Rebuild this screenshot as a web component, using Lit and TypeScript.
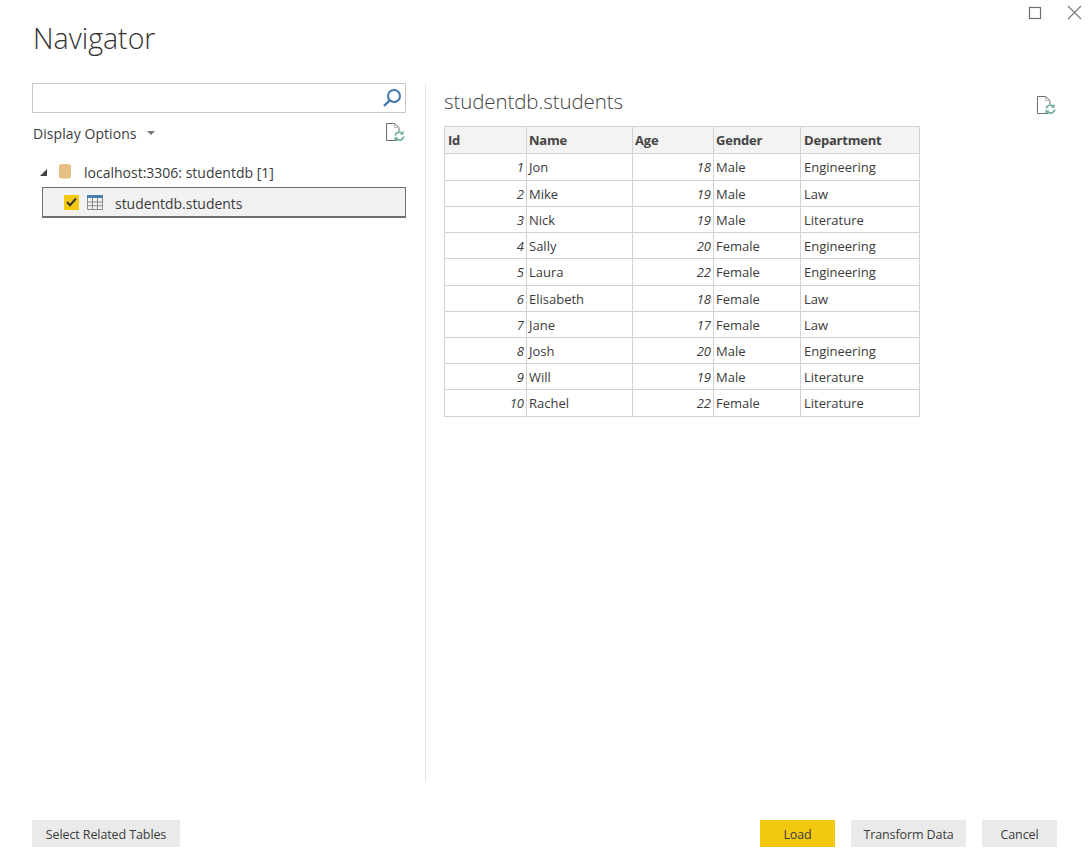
import { LitElement, html, css, svg } from "lit";
import { customElement } from "lit/decorators.js";

const rows: [number, string, number, string, string][] = [
  [1, "Jon", 18, "Male", "Engineering"],
  [2, "Mike", 19, "Male", "Law"],
  [3, "Nick", 19, "Male", "Literature"],
  [4, "Sally", 20, "Female", "Engineering"],
  [5, "Laura", 22, "Female", "Engineering"],
  [6, "Elisabeth", 18, "Female", "Law"],
  [7, "Jane", 17, "Female", "Law"],
  [8, "Josh", 20, "Male", "Engineering"],
  [9, "Will", 19, "Male", "Literature"],
  [10, "Rachel", 22, "Female", "Literature"],
];

const refreshDoc = svg`<svg class="doc" width="20" height="20" viewBox="0 0 20 20" fill="none">
  <path d="M12 18.5H1.5V1.5H9.5L14 5.5V9" stroke="#6e6e6e" stroke-width="1"/>
  <path d="M9.5 1.5V5.5H14" stroke="#b5b5b5" stroke-width="1"/>
  <path d="M10.2 13.5a4.2 4.2 0 0 1 7.2-2" stroke="#6fae9a" stroke-width="1.7"/>
  <path d="M18.8 14.5a4.2 4.2 0 0 1-7.2 2.2" stroke="#6fae9a" stroke-width="1.7"/>
  <path d="M18.6 8.8v4h-3.8z" fill="#6fae9a"/>
  <path d="M9.4 19.2v-4h3.8z" fill="#6fae9a"/>
</svg>`;

@customElement("app-root")
export class AppRoot extends LitElement {
  static styles = css`
    :host {
      display: flex;
      flex-direction: column;
      width: 1088px;
      height: 857px;
      background: #fff;
      color: #3b3b3b;
      font-family: "Open Sans", "Noto Sans", "Liberation Sans", sans-serif;
      font-size: 13.5px;
      overflow: hidden;
    }
    .controls {
      display: flex;
      justify-content: flex-end;
      align-items: center;
      gap: 25px;
      padding: 5px 6px 0 0;
      height: 15px;
    }
    .controls svg { display: block; }
    h1 {
      margin: 0;
      padding: 0 0 0 33px;
      height: 63px;
      font-weight: 300;
      font-size: 28.5px;
      line-height: 36px;
      color: #333;
      box-sizing: border-box;
    }
    .main {
      display: flex;
      height: 699px;
    }
    .left {
      width: 374px;
      margin-left: 32px;
      flex: none;
      display: flex;
      flex-direction: column;
    }
    .divider {
      width: 1px;
      background: #e6e6e6;
      margin: 0 18px 0 19px;
      flex: none;
    }
    .search {
      box-sizing: border-box;
      height: 30px;
      border: 1px solid #c8c8c8;
      display: flex;
      justify-content: flex-end;
      align-items: center;
      padding-right: 2px;
    }
    .options {
      display: flex;
      align-items: center;
      height: 40px;
      padding: 0 1px 0 1px;
      box-sizing: border-box;
      font-size: 14px;
    }
    .options .label { letter-spacing: 0.07px; }
    .caret {
      width: 0;
      height: 0;
      margin-left: 10px;
      border-left: 4px solid transparent;
      border-right: 4px solid transparent;
      border-top: 4px solid #777;
    }
    .options .doc { margin-left: auto; margin-right: 0; margin-top: -2px; }
    .node {
      display: flex;
      align-items: center;
      height: 30px;
      margin-top: 4px;
      padding: 0 0 0 8px;
      box-sizing: border-box;
      font-size: 14px;
    }
    .tri {
      width: 0;
      height: 0;
      border-left: 7px solid transparent;
      border-bottom: 7px solid #444;
      margin-right: 12px;
    }
    .node svg { margin-top: -2px; }
    .node .name { margin-left: 13px; }
    .item {
      box-sizing: border-box;
      height: 31px;
      margin-left: 10px;
      background: #f2f2f2;
      border: 1px solid #707070;
      border-width: 1px 1px 2px 1px;
      display: flex;
      align-items: center;
      padding-left: 21px;
      font-size: 14px;
      letter-spacing: -0.03px;
    }
    .check {
      width: 15px;
      height: 15px;
      background: #f2c811;
      display: flex;
      align-items: center;
      justify-content: center;
      margin-right: 8px;
    }
    .item .name { margin-left: 12px; padding-top: 2px; }
    .right {
      flex: 1;
      display: flex;
      flex-direction: column;
      min-width: 0;
    }
    .right-head {
      display: flex;
      align-items: center;
      height: 43px;
      padding-right: 32px;
    }
    h2 {
      margin: 0 0 8px;
      font-weight: 300;
      font-size: 20.5px;
      letter-spacing: -0.1px;
      color: #444;
      flex: 1;
      line-height: 38px;
    }
    table {
      border-collapse: collapse;
      table-layout: fixed;
      width: 475px;
      font-size: 13px;
      border: 1px solid #d2d2d2;
    }
    th, td {
      border: 1px solid #d2d2d2;
      padding: 0 2px;
      white-space: nowrap;
      overflow: hidden;
      line-height: 18px;
    }
    th {
      height: 27px;
      background: #f3f3f3;
      text-align: left;
      font-weight: 700;
      color: #444;
      padding-left: 2px;
      box-sizing: border-box;
      letter-spacing: -0.2px;
    }
    th:first-child, th:last-child, td:last-child { padding-left: 3px; }
    td { height: 26px; box-sizing: border-box; padding-top: 1px; }
    tbody tr:first-child td, tbody tr:nth-child(5) td, tbody tr:last-child td { height: 27px; padding-top: 0; }
    tbody tr:nth-child(2) td, tbody tr:nth-child(6) td, tbody tr:nth-child(7) td { padding-top: 0; }
    td.num { text-align: right; font-style: italic; padding-right: 2px; }
    .footer {
      display: flex;
      align-items: flex-start;
      padding: 38px 31px 0 32px;
      gap: 16px;
    }
    .btn {
      box-sizing: border-box;
      height: 27px;
      background: #eaeaea;
      border: none;
      color: #3b3b3b;
      font: inherit;
      font-size: 12.5px;
      letter-spacing: -0.1px;
      padding: 2px 0 0;
      flex: none;
    }
    .related { width: 148px; margin-right: auto; }
    .load { width: 75px; background: #f2c811; }
    .transform { width: 115px; }
    .cancel { width: 75px; }
  `;

  render() {
    return html`
      <div class="controls">
        <svg width="14" height="14" viewBox="0 0 14 14" fill="none"><rect x="1.5" y="1.5" width="11" height="11" stroke="#6e6e6e" stroke-width="1.2"/></svg>
        <svg width="15" height="15" viewBox="0 0 15 15" fill="none"><path d="M1 1L14 14M14 1L1 14" stroke="#777" stroke-width="1.1"/></svg>
      </div>
      <h1>Navigator</h1>
      <div class="main">
        <div class="left">
          <div class="search">
            <svg width="22" height="22" viewBox="0 0 22 22" fill="none">
              <circle cx="13" cy="9" r="6" stroke="#3f78ad" stroke-width="2"/>
              <path d="M8.5 13.5L3 19" stroke="#3f78ad" stroke-width="2.4"/>
            </svg>
          </div>
          <div class="options">
            <span class="label">Display Options</span><span class="caret"></span>
            ${refreshDoc}
          </div>
          <div class="node">
            <span class="tri"></span>
            <svg width="12" height="16" viewBox="0 0 12 16"><path d="M0 2.5C0 .5 12 .5 12 2.5V14c0 2-12 2-12 0z" fill="#e6bf82"/></svg>
            <span class="name">localhost:3306: studentdb [1]</span>
          </div>
          <div class="item">
            <span class="check">
              <svg width="11" height="10" viewBox="0 0 11 10" fill="none"><path d="M1 5l3 3.2L10 1.5" stroke="#333" stroke-width="2"/></svg>
            </span>
            <svg width="16" height="15" viewBox="0 0 16 15" fill="none">
              <rect x="0" y="0" width="16" height="3" fill="#4a7fb0"/>
              <path d="M.5 3v11.5h15V3M.5 7h15M.5 10.7h15M5.5 3v11.5M10.5 3v11.5" stroke="#8a8a8a"/>
            </svg>
            <span class="name">studentdb.students</span>
          </div>
        </div>
        <div class="divider"></div>
        <div class="right">
          <div class="right-head">
            <h2>studentdb.students</h2>
            ${refreshDoc}
          </div>
          <table>
            <colgroup>
              <col style="width:82px" /><col style="width:106px" /><col style="width:81px" /><col style="width:87px" /><col style="width:119px" />
            </colgroup>
            <thead>
              <tr><th>Id</th><th>Name</th><th>Age</th><th>Gender</th><th>Department</th></tr>
            </thead>
            <tbody>
              ${rows.map(
                (r) => html`<tr>
                  <td class="num">${r[0]}</td><td>${r[1]}</td><td class="num">${r[2]}</td><td>${r[3]}</td><td>${r[4]}</td>
                </tr>`
              )}
            </tbody>
          </table>
        </div>
      </div>
      <div class="footer">
        <button class="btn related">Select Related Tables</button>
        <button class="btn load">Load</button>
        <button class="btn transform">Transform Data</button>
        <button class="btn cancel">Cancel</button>
      </div>
    `;
  }
}
